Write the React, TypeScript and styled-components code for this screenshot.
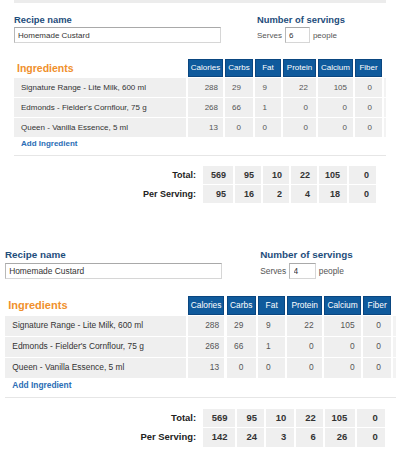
import React from "react";
import styled, { createGlobalStyle } from "styled-components";

const Global = createGlobalStyle`
  html, body { margin: 0; padding: 0; background: #fff; }
  body { font-family: "Liberation Sans", Arial, sans-serif; }
`;

const FONT = `"Liberation Sans", Arial, sans-serif`;

const Page = styled.div`
  width: 416px;
  height: 476px;
  overflow: hidden;
  display: flex;
  flex-direction: column;
`;

const Slot = styled.section<{ $left: number; $top: number }>`
  padding-left: ${(p) => p.$left}px;
  margin-top: ${(p) => p.$top}px;
`;

const TopBar = styled.div`
  width: 372px;
  height: 3px;
  background: #ececec;
  margin-bottom: 11px;
`;

const Card = styled.div<{ $zoom: number }>`
  zoom: ${(p) => p.$zoom};
  width: 372px;
`;

const FormRow = styled.div`
  display: flex;
  gap: 36px;
`;

const Field = styled.div`
  display: flex;
  flex-direction: column;
  gap: 2px;
`;

const Label = styled.div`
  font-size: 9.4px;
  line-height: 11px;
  font-weight: bold;
  color: #1e4d7b;
`;

const TextInput = styled.input<{ $w: number }>`
  box-sizing: border-box;
  width: ${(p) => p.$w}px;
  height: 16px;
  margin: 0;
  padding: 0 3px;
  border: 1px solid #d6d6d6;
  border-top-color: #a9a9a9;
  border-left-color: #b8b8b8;
  font: 8px ${FONT};
  color: #333;
  background: #fff;
  outline: none;
`;

const ServesRow = styled.div`
  display: flex;
  align-items: center;
  gap: 3px;
  font-size: 8px;
  color: #555;
`;

const Grid = styled.div`
  display: grid;
  grid-template-columns: 172px 35px 28px 26px 33px 35px 27px 2px;
  column-gap: 2px;
  row-gap: 1px;
  margin-top: 16px;
`;

const IngredientsTitle = styled.div`
  height: 18px;
  line-height: 18px;
  padding-left: 3px;
  font-size: 10.5px;
  font-weight: bold;
  color: #f0902c;
`;

const HeadCell = styled.div`
  box-sizing: border-box;
  height: 18px;
  line-height: 16px;
  background: #0f5a9c;
  border: 1px solid #0a4680;
  color: #fff;
  font-size: 8px;
  text-align: center;
  white-space: nowrap;
`;

const Blank = styled.div``;

const NameCell = styled.div`
  height: 19px;
  line-height: 19px;
  background: #efefef;
  padding-left: 7px;
  font-size: 8px;
  color: #333;
  white-space: nowrap;
`;

const NumCell = styled.div<{ $pad: number }>`
  height: 19px;
  line-height: 19px;
  background: #efefef;
  padding-right: ${(p) => p.$pad}px;
  text-align: right;
  font-size: 8px;
  color: #555;
`;

const EdgeCell = styled.div`
  height: 19px;
  background: #f3f3f3;
`;

const AddLink = styled.a`
  display: block;
  margin-top: 2px;
  padding-left: 7px;
  line-height: 10px;
  font-size: 8px;
  font-weight: bold;
  color: #2a6db5;
  text-decoration: none;
`;

const Divider = styled.div`
  height: 1px;
  margin-top: 6px;
  background: #e6e6e6;
`;

const Totals = styled.div`
  display: grid;
  grid-template-columns: 187px 30px 26px 26px 26px 28px 27px;
  column-gap: 2px;
  row-gap: 1px;
  margin-top: 10px;
`;

const TotalLabel = styled.div`
  height: 18px;
  line-height: 18px;
  padding-right: 5px;
  text-align: right;
  font-size: 9px;
  font-weight: bold;
  color: #222;
`;

const TotalCell = styled.div`
  height: 18px;
  line-height: 18px;
  padding-right: 7px;
  background: #efefef;
  text-align: right;
  font-size: 9px;
  font-weight: bold;
  color: #333;
`;

const COLS = [
  { name: "Calories", pad: 5 },
  { name: "Carbs", pad: 12 },
  { name: "Fat", pad: 14 },
  { name: "Protein", pad: 8 },
  { name: "Calcium", pad: 6 },
  { name: "Fiber", pad: 10 },
];

const INGREDIENTS: [string, number[]][] = [
  ["Signature Range - Lite Milk, 600 ml", [288, 29, 9, 22, 105, 0]],
  ["Edmonds - Fielder's Cornflour, 75 g", [268, 66, 1, 0, 0, 0]],
  ["Queen - Vanilla Essence, 5 ml", [13, 0, 0, 0, 0, 0]],
];

const TOTALS = COLS.map((_, i) =>
  INGREDIENTS.reduce((s, [, v]) => s + v[i], 0)
);

function RecipeCard({ serves, zoom }: { serves: number; zoom: number }) {
  const perServing = TOTALS.map((t) => Math.round(t / serves));
  return (
    <Card $zoom={zoom}>
      <FormRow>
        <Field>
          <Label>Recipe name</Label>
          <TextInput $w={207} defaultValue="Homemade Custard" />
        </Field>
        <Field>
          <Label>Number of servings</Label>
          <ServesRow>
            <span>Serves</span>
            <TextInput $w={25} defaultValue={String(serves)} />
            <span>people</span>
          </ServesRow>
        </Field>
      </FormRow>

      <Grid>
        <IngredientsTitle>Ingredients</IngredientsTitle>
        {COLS.map((c) => (
          <HeadCell key={c.name}>{c.name}</HeadCell>
        ))}
        <Blank />
        {INGREDIENTS.map(([name, vals]) => (
          <React.Fragment key={name}>
            <NameCell>{name}</NameCell>
            {vals.map((v, i) => (
              <NumCell key={i} $pad={COLS[i].pad}>
                {v}
              </NumCell>
            ))}
            <EdgeCell />
          </React.Fragment>
        ))}
      </Grid>

      <AddLink href="#">Add Ingredient</AddLink>
      <Divider />

      <Totals>
        <TotalLabel>Total:</TotalLabel>
        {TOTALS.map((v, i) => (
          <TotalCell key={i}>{v}</TotalCell>
        ))}
        <TotalLabel>Per Serving:</TotalLabel>
        {perServing.map((v, i) => (
          <TotalCell key={i}>{v}</TotalCell>
        ))}
      </Totals>
    </Card>
  );
}

export default function App() {
  return (
    <>
      <Global />
      <Page>
        <Slot $left={14} $top={0}>
          <TopBar />
          <RecipeCard serves={6} zoom={1} />
        </Slot>
        <Slot $left={5} $top={46}>
          <RecipeCard serves={4} zoom={1.05} />
        </Slot>
      </Page>
    </>
  );
}
